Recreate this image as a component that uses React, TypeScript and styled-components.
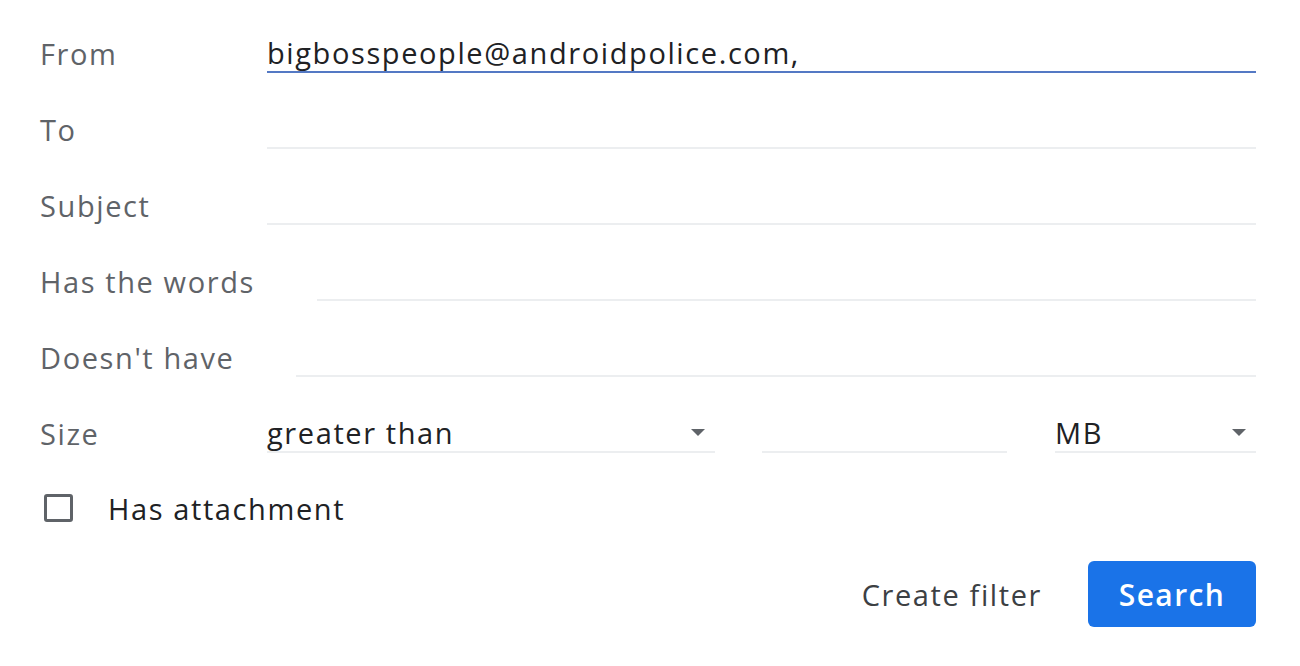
import React from "react";
import styled, { createGlobalStyle } from "styled-components";

const Global = createGlobalStyle`
  html, body { margin: 0; padding: 0; background: #ffffff; }
  body { font-family: "Open Sans", "Noto Sans", Arial, sans-serif; }
  * { box-sizing: border-box; }
`;

const Form = styled.div`
  width: 1300px;
  height: 666px;
  padding: 32px 44px 0 40px;
  display: flex;
  flex-direction: column;
  letter-spacing: 1.6px;
`;

const Row = styled.div`
  display: flex;
  align-items: center;
  height: 40px;
  margin-bottom: 36px;
`;

const Label = styled.div`
  flex: none;
  min-width: 227px;
  padding-right: 62px;
  font-size: 29px;
  color: #5f6368;
  line-height: 40px;
  padding-top: 4px;
`;

const Field = styled.div<{ $focused?: boolean; $width?: string; $gap?: string }>`
  ${(p) => (p.$width ? `flex: none; width: ${p.$width};` : "flex: 1;")}
  ${(p) => (p.$gap ? `margin-left: ${p.$gap};` : "")}
  height: 41px;
  border-bottom: 2px solid ${(p) => (p.$focused ? "#5479c4" : "#eceef0")};
  font-size: 29px;
  color: #202124;
  line-height: 40px;
  padding-top: 3px;
  display: flex;
  align-items: center;
  justify-content: space-between;
  white-space: nowrap;
`;

const Arrow = styled.span`
  width: 0;
  height: 0;
  border-left: 7px solid transparent;
  border-right: 7px solid transparent;
  border-top: 7px solid #5f6368;
  margin-right: 10px;
`;

const CheckRow = styled.div`
  display: flex;
  align-items: center;
  height: 40px;
  padding-left: 4px;
`;

const Box = styled.span`
  width: 29px;
  height: 28px;
  border: 3px solid #5f6368;
  border-radius: 3px;
  margin-right: 35px;
`;

const CheckText = styled.span`
  font-size: 29px;
  color: #202124;
`;

const Actions = styled.div`
  display: flex;
  justify-content: flex-end;
  align-items: center;
  margin-top: 33px;
  gap: 46px;
`;

const TextButton = styled.span`
  font-size: 29px;
  color: #3c4043;
`;

const PrimaryButton = styled.button`
  width: 168px;
  height: 66px;
  border: none;
  border-radius: 6px;
  background: #1a73e8;
  color: #ffffff;
  font-family: inherit;
  font-size: 30px;
  font-weight: 600;
  letter-spacing: 1.4px;
`;

export default function App() {
  return (
    <>
      <Global />
      <Form>
        <Row>
          <Label>From</Label>
          <Field $focused>bigbosspeople@androidpolice.com,</Field>
        </Row>
        <Row>
          <Label>To</Label>
          <Field />
        </Row>
        <Row>
          <Label>Subject</Label>
          <Field />
        </Row>
        <Row>
          <Label>Has the words</Label>
          <Field />
        </Row>
        <Row>
          <Label>Doesn't have</Label>
          <Field />
        </Row>
        <Row>
          <Label>Size</Label>
          <Field $width="448px">
            greater than
            <Arrow />
          </Field>
          <Field $width="245px" $gap="47px" />
          <Field $gap="48px">
            MB
            <Arrow />
          </Field>
        </Row>
        <CheckRow>
          <Box />
          <CheckText>Has attachment</CheckText>
        </CheckRow>
        <Actions>
          <TextButton>Create filter</TextButton>
          <PrimaryButton>Search</PrimaryButton>
        </Actions>
      </Form>
    </>
  );
}
